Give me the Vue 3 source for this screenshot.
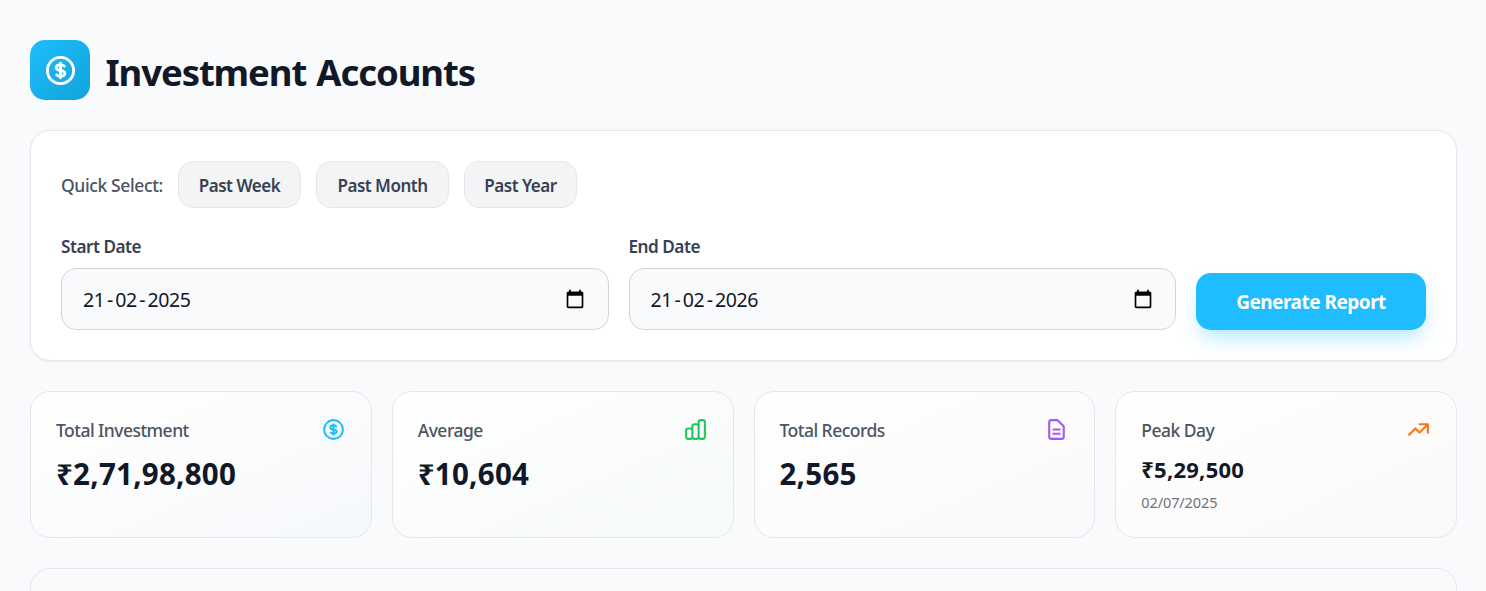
<script setup>
const ranges = [
  { label: 'Past Week', cls: 'week' },
  { label: 'Past Month', cls: 'month' },
  { label: 'Past Year', cls: 'year' },
]

const dates = [
  { label: 'Start Date', parts: ['21', '02', '2025'] },
  { label: 'End Date', parts: ['21', '02', '2026'] },
]

const dollar =
  'M12 8c-1.657 0-3 .895-3 2s1.343 2 3 2 3 .895 3 2-1.343 2-3 2m0-8c1.11 0 2.08.402 2.599 1M12 8V7m0 1v8m0 0v1m0-1c-1.11 0-2.08-.402-2.599-1M21 12a9 9 0 11-18 0 9 9 0 0118 0z'

const stats = [
  { label: 'Total Investment', value: '₹2,71,98,800', cls: 'blue', icon: dollar },
  {
    label: 'Average',
    value: '₹10,604',
    cls: 'green',
    icon: 'M9 19v-6a2 2 0 00-2-2H5a2 2 0 00-2 2v6a2 2 0 002 2h2a2 2 0 002-2zm0 0V9a2 2 0 012-2h2a2 2 0 012 2v10m-6 0a2 2 0 002 2h2a2 2 0 002-2m0 0V5a2 2 0 012-2h2a2 2 0 012 2v14a2 2 0 01-2 2h-2a2 2 0 01-2-2z',
  },
  {
    label: 'Total Records',
    value: '2,565',
    cls: 'purple',
    icon: 'M9 12h6m-6 4h6m2 5H7a2 2 0 01-2-2V5a2 2 0 012-2h5.586a1 1 0 01.707.293l5.414 5.414a1 1 0 01.293.707V19a2 2 0 01-2 2z',
  },
  {
    label: 'Peak Day',
    value: '₹5,29,500',
    note: '02/07/2025',
    cls: 'orange',
    icon: 'M13 7h8m0 0v8m0-8l-8 8-4-4-6 6',
  },
]
</script>

<template>
  <main class="page">
    <header class="header">
      <div class="logo">
        <svg class="logo-icon" viewBox="0 0 24 24"><path :d="dollar" /></svg>
      </div>
      <h1 class="title">Investment Accounts</h1>
    </header>

    <section class="filters">
      <div class="quick">
        <span class="quick-label">Quick Select:</span>
        <button v-for="r in ranges" :key="r.label" class="chip" :class="r.cls">{{ r.label }}</button>
      </div>
      <div class="form">
        <div v-for="d in dates" :key="d.label" class="field">
          <span class="field-label">{{ d.label }}</span>
          <div class="input">
            <div class="date">
              <span>{{ d.parts[0] }}</span><span class="sep">-</span><span>{{ d.parts[1] }}</span><span class="sep">-</span><span>{{ d.parts[2] }}</span>
            </div>
            <svg class="calendar" viewBox="0 0 24 24">
              <path d="M20 3h-1V1h-2v2H7V1H5v2H4c-1.1 0-2 .9-2 2v16c0 1.1.9 2 2 2h16c1.1 0 2-.9 2-2V5c0-1.1-.9-2-2-2zm0 18H4V8h16v13z" />
            </svg>
          </div>
        </div>
        <button class="submit">Generate Report</button>
      </div>
    </section>

    <section class="stats">
      <article v-for="s in stats" :key="s.label" class="stat" :class="s.cls">
        <div class="stat-head">
          <span class="stat-label">{{ s.label }}</span>
          <svg class="stat-icon" viewBox="0 0 24 24"><path :d="s.icon" /></svg>
        </div>
        <div class="stat-value" :class="{ small: s.note }">{{ s.value }}</div>
        <div v-if="s.note" class="stat-note">{{ s.note }}</div>
      </article>
    </section>

    <section class="panel"></section>
  </main>
</template>

<style>
html,
body {
  background: #f9fafc;
  overflow: hidden;
}
</style>

<style scoped>
.page {
  box-sizing: border-box;
  height: 591px;
  overflow: hidden;
  padding: 40px 29px 0 30px;
  background: #f9fafc;
  color: #111827;
  font-family: "Segoe UI", "Noto Sans", "Open Sans", sans-serif;
  display: flex;
  flex-direction: column;
}
.page > * {
  flex-shrink: 0;
}
.header {
  display: flex;
  align-items: center;
  gap: 15.5px;
  height: 60px;
}
.logo {
  width: 60px;
  height: 60px;
  border-radius: 15px;
  background: linear-gradient(135deg, #1fbdff, #10a3d8);
  display: flex;
  align-items: center;
  justify-content: center;
}
.logo-icon,
.stat-icon {
  fill: none;
  stroke: currentColor;
  stroke-width: 2;
  stroke-linecap: round;
  stroke-linejoin: round;
}
.logo-icon {
  width: 35px;
  height: 35px;
  color: #fff;
}
.title {
  margin: 3px 0 0;
  font-size: 36.5px;
  line-height: 50px;
  font-weight: 700;
  letter-spacing: -1.1px;
  word-spacing: 1.8px;
  white-space: nowrap;
}
.filters {
  box-sizing: border-box;
  height: 231px;
  margin-top: 30px;
  padding: 30px;
  background: #fff;
  border: 1px solid #e5e7eb;
  border-radius: 20px;
  box-shadow: 0 1px 3px rgba(0, 0, 0, 0.05);
}
.quick {
  display: flex;
  align-items: center;
  gap: 15px;
  height: 47px;
}
.quick-label {
  width: 102px;
  padding-top: 2px;
  font-size: 17.5px;
  line-height: 25px;
  font-weight: 500;
  letter-spacing: -0.38px;
  color: #4b5563;
  white-space: nowrap;
}
.chip {
  box-sizing: border-box;
  height: 47px;
  padding: 2px 0 0;
  border: 1px solid #e5e7eb;
  border-radius: 15px;
  background: #f3f4f6;
  color: #374151;
  font-family: inherit;
  font-size: 17px;
  font-weight: 600;
  letter-spacing: -0.5px;
  white-space: nowrap;
}
.week {
  width: 123px;
}
.month {
  width: 133px;
}
.year {
  width: 113px;
}
.form {
  display: flex;
  align-items: flex-end;
  gap: 20px;
  margin-top: 25px;
}
.field {
  flex: 1;
}
.field-label {
  display: block;
  height: 25px;
  margin-bottom: 10px;
  font-size: 17.2px;
  line-height: 27px;
  font-weight: 600;
  letter-spacing: -0.5px;
  color: #374151;
}
.input {
  box-sizing: border-box;
  height: 62px;
  padding: 0 21px;
  border: 1px solid #d1d5db;
  border-radius: 15px;
  background: #f9fafc;
  display: flex;
  align-items: center;
  justify-content: space-between;
}
.date {
  display: flex;
  font-size: 19.5px;
  line-height: 28px;
  letter-spacing: -0.35px;
  padding-top: 2px;
}
.sep {
  width: 10.6px;
  text-align: center;
}
.calendar {
  width: 20px;
  height: 20px;
  margin: 0 1.5px 1px 0;
}
.submit {
  width: 230px;
  height: 57px;
  padding: 0;
  border: 0;
  border-radius: 15px;
  background: #1fbdff;
  color: #fff;
  font-family: inherit;
  font-size: 19px;
  font-weight: 700;
  letter-spacing: -0.5px;
  box-shadow: 0 11px 19px -4px rgba(31, 189, 255, 0.35);
}
.stats {
  display: grid;
  grid-template-columns: repeat(4, 1fr);
  gap: 20px;
  margin-top: 30px;
}
.stat {
  box-sizing: border-box;
  height: 147px;
  padding: 25px;
  border: 1px solid #e5e7eb;
  border-radius: 20px;
}
.blue {
  background: linear-gradient(to bottom right, #fff, #f9fafc 75%, #f4f8fc);
}
.green {
  background: linear-gradient(to bottom right, #fff, #f6faf9);
}
.purple {
  background: linear-gradient(to bottom right, #fff, #f9f9fc);
}
.orange {
  background: linear-gradient(to bottom right, #fff, #fbf9f7);
}
.stat-head {
  display: flex;
  align-items: center;
  justify-content: space-between;
  height: 25px;
}
.stat-label {
  padding-top: 2px;
  font-size: 17.5px;
  line-height: 25px;
  font-weight: 500;
  letter-spacing: -0.53px;
  color: #4b5563;
}
.stat-icon {
  width: 25px;
  height: 25px;
}
.blue .stat-icon {
  color: #1fbdff;
}
.green .stat-icon {
  color: #22c55e;
}
.purple .stat-icon {
  color: #a855f7;
}
.orange .stat-icon {
  color: #f97316;
}
.stat-value {
  margin-top: 13px;
  font-size: 29.5px;
  line-height: 37px;
  font-weight: 700;
  letter-spacing: 0.25px;
}
.stat-value.small {
  margin-top: 10px;
  font-size: 22px;
  line-height: 35px;
}
.stat-note {
  margin-top: 5px;
  font-size: 14.5px;
  line-height: 20px;
  letter-spacing: -0.1px;
  color: #6b7280;
}
.panel {
  height: 60px;
  margin-top: 30px;
  border: 1px solid #e5e7eb;
  border-radius: 20px;
}
</style>
